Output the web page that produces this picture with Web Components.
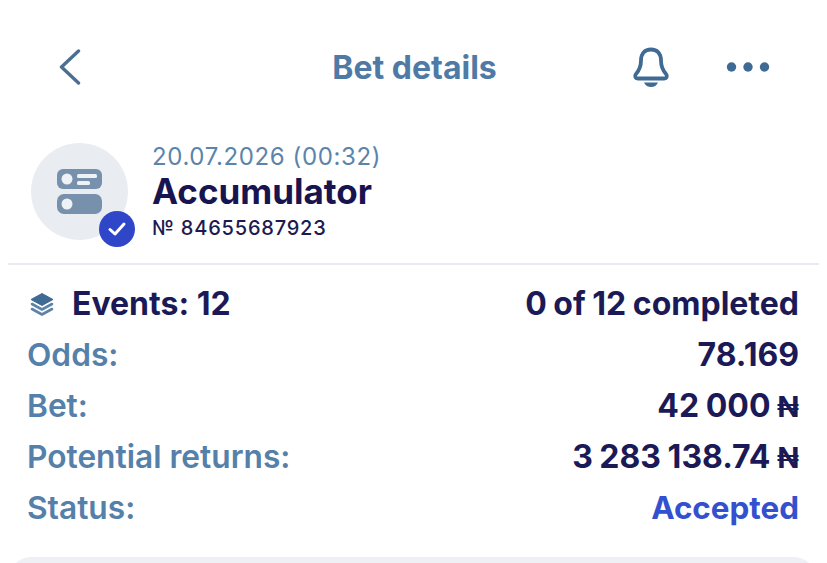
<!DOCTYPE html>
<html>
<head>
<meta charset="utf-8">
<style>
  html, body { margin: 0; height: 563px; overflow: hidden; background: #fff; }
  body { font-family: Inter, "Noto Sans", sans-serif; }
  .naira { font-size: 29px; }
</style>
</head>
<body>
<bet-page></bet-page>

<script>
class BetAppBar extends HTMLElement {
  constructor() {
    super();
    this.attachShadow({ mode: 'open' });
    this.shadowRoot.innerHTML = `
      <style>
        :host { display: grid; grid-template-columns: 1fr auto 1fr; align-items: center; flex: none; height: 134px; padding: 0 57px 0 59px; box-sizing: border-box; }
        .title { font-size: 32px; font-weight: 700; color: #4f7aa6; }
        .right { display: flex; justify-content: flex-end; align-items: center; gap: 56px; }
        svg { display: block; }
      </style>
      <svg width="22" height="36" viewBox="0 0 22 36" fill="none"><path d="M19.500 2 L2.500 18 L19.500 34" stroke="#4a6f92" stroke-width="3.400" stroke-linecap="round" stroke-linejoin="round"/></svg>
      <div class="title"><slot></slot></div>
      <div class="right">
        <svg width="38" height="41" viewBox="0 0 38 41" fill="none">
          <path d="M19 2.500c-6.500 0-10 4.500-10 11 0 6.500-1.500 9.500-5 13.500-1.800 2.100-.7 4.500 1.800 4.500h26.400c2.500 0 3.600-2.400 1.800-4.500-3.500-4-5-7-5-13.500 0-6.500-3.500-11-10-11z" stroke="#3f6a94" stroke-width="3.800" stroke-linejoin="round"/>
          <path d="M12 35.500h14c-1.300 3-4 4.500-7 4.500s-5.700-1.500-7-4.500z" fill="#3f6a94"/>
        </svg>
        <svg width="44" height="12" viewBox="0 0 44 12" fill="#3f6a94"><circle cx="5.500" cy="6" r="4.700"/><circle cx="22" cy="6" r="4.700"/><circle cx="38.500" cy="6" r="4.700"/></svg>
      </div>`;
  }
}
customElements.define('bet-app-bar', BetAppBar);

class BetSummary extends HTMLElement {
  constructor() {
    super();
    this.attachShadow({ mode: 'open' });
    this.shadowRoot.innerHTML = `
      <style>
        :host { display: flex; gap: 24px; flex: none; padding: 9px 0 0 23px; height: 131px; box-sizing: border-box; border-bottom: 2px solid #e8eaef; margin: 0 8px; }
        .avatar { position: relative; width: 97px; height: 97px; border-radius: 50%; background: #e9edf2; display: flex; align-items: center; justify-content: center; flex: none; }
        .badge { position: absolute; right: -7px; bottom: -7px; width: 36px; height: 36px; border-radius: 50%; background: #2f46c9; display: flex; align-items: center; justify-content: center; }
        .info { display: flex; flex-direction: column; }
        .date { font-size: 24px; line-height: 27px; color: #5a84ab; letter-spacing: 0.63px; }
        .name { font-size: 35px; line-height: 44px; font-weight: 700; color: #17144f; margin-top: -1px; }
        .num { font-size: 20px; line-height: 30px; font-weight: 500; color: #1c1a52; letter-spacing: 0.8px; }
        svg { display: block; }
      </style>
      <div class="avatar">
        <svg width="46" height="45" viewBox="0 0 46 45">
          <rect x="0" y="0" width="45" height="20" rx="6" fill="#7790ab"/>
          <rect x="0" y="25" width="45" height="20" rx="7" fill="#7790ab"/>
          <circle cx="10" cy="10" r="5.500" fill="#eef1f5"/>
          <circle cx="10" cy="35" r="5.500" fill="#eef1f5"/>
          <rect x="20" y="5" width="20" height="4" rx="1.500" fill="#eef1f5"/>
          <rect x="20" y="12" width="13" height="4" rx="1.500" fill="#eef1f5"/>
        </svg>
        <div class="badge">
          <svg width="20" height="16" viewBox="0 0 20 16" fill="none"><path d="M3 8.500 L8 13 L17 3" stroke="#fff" stroke-width="3" stroke-linecap="round" stroke-linejoin="round"/></svg>
        </div>
      </div>
      <div class="info">
        <span class="date"><slot name="date"></slot></span>
        <span class="name"><slot name="name"></slot></span>
        <span class="num"><slot name="num"></slot></span>
      </div>`;
  }
}
customElements.define('bet-summary', BetSummary);

class BetRow extends HTMLElement {
  constructor() {
    super();
    this.attachShadow({ mode: 'open' });
    this.shadowRoot.innerHTML = `
      <style>
        :host { display: flex; justify-content: space-between; align-items: center; height: 51px; font-size: 32px; font-weight: 700; color: #1b1a56; }
        .label { color: #5580a9; font-weight: 600; font-size: 31.700px; display: flex; align-items: center; gap: 18px; }
        .value { word-spacing: -1px; }
        :host([kind="head"]) .label { color: #1b1a56; font-weight: 700; font-size: 32px; }
        :host([kind="status"]) .value { color: #3350cf; font-size: 31.400px; }
      </style>
      <span class="label"><slot name="label"></slot></span>
      <span class="value"><slot></slot></span>`;
  }
}
customElements.define('bet-row', BetRow);

class BetPage extends HTMLElement {
  constructor() {
    super();
    this.attachShadow({ mode: 'open' });
    this.shadowRoot.innerHTML = `
      <style>
        :host { display: flex; flex-direction: column; height: 563px; overflow: hidden; }
        .rows { padding: 13px 28px 0 27px; flex: none; }
        .sheet { margin: 24px 11px 0 9px; height: 60px; background: #eef0f6; border-radius: 22px; flex: none; }
        svg { display: block; margin-left: 3px; }
      </style>
      <bet-app-bar>Bet details</bet-app-bar>
      <bet-summary>
        <span slot="date">20.07.2026 (00:32)</span>
        <span slot="name">Accumulator</span>
        <span slot="num">№ 84655687923</span>
      </bet-summary>
      <div class="rows">
        <bet-row kind="head">
          <svg slot="label" width="24" height="24" viewBox="0 0 24 24">
            <path d="M12 1.500 L23 7.500 L12 13.500 L1 7.500 Z" fill="#3f6a94" stroke="#3f6a94" stroke-linejoin="round" stroke-width="1"/>
            <path d="M2 12 L12 17.500 L22 12" fill="none" stroke="#5f83a8" stroke-width="2.600" stroke-linecap="round" stroke-linejoin="round"/>
            <path d="M2 17 L12 22.500 L22 17" fill="none" stroke="#5f83a8" stroke-width="2.600" stroke-linecap="round" stroke-linejoin="round"/>
          </svg>
          <span slot="label">Events: 12</span>
          0 of 12 completed
        </bet-row>
        <bet-row><span slot="label">Odds:</span>78.169</bet-row>
        <bet-row><span slot="label">Bet:</span>42 000 <span style="font-size:29px">₦</span></bet-row>
        <bet-row><span slot="label">Potential returns:</span>3 283 138.74 <span style="font-size:29px">₦</span></bet-row>
        <bet-row kind="status"><span slot="label">Status:</span>Accepted</bet-row>
      </div>
      <div class="sheet"></div>`;
  }
}
customElements.define('bet-page', BetPage);
</script>
</body>
</html>
